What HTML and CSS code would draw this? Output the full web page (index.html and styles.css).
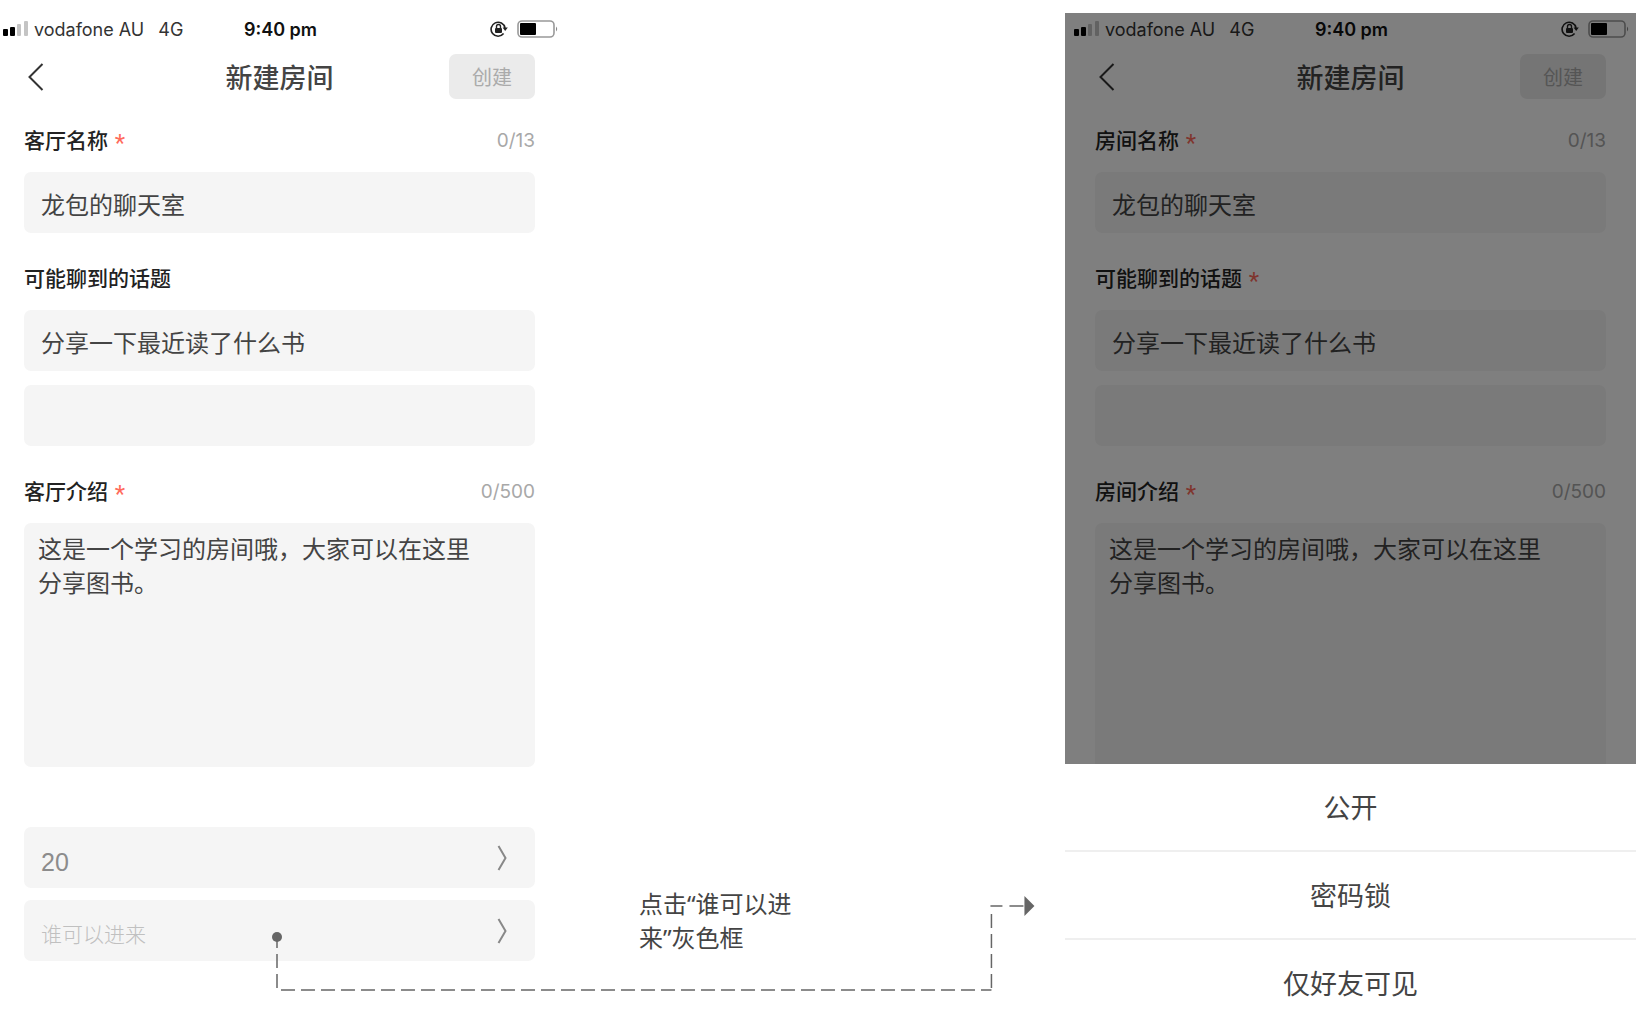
FILE: index.html
```html
<!DOCTYPE html>
<html lang="zh-CN">
<head>
    <meta charset="UTF-8">
    <meta name="viewport" content="width=device-width, initial-scale=1.0">
    <title>新建房间</title>
    <link rel="stylesheet" href="styles.css">
</head>
<body>
    <!-- Icon dùng chung cho hai màn hình -->
    <svg class="sprite" aria-hidden="true">
        <symbol id="icon-signal" viewBox="0 0 26 16">
            <rect x="0" y="8" width="5" height="7" rx="1" fill="#000"/>
            <rect x="7" y="6" width="5" height="9" rx="1" fill="#000"/>
            <rect x="14" y="3" width="4" height="12" rx="1" fill="#c4c4c4"/>
            <rect x="21" y="0" width="4" height="15" rx="1" fill="#c4c4c4"/>
        </symbol>
        <symbol id="icon-lock" viewBox="0 0 18 18">
            <path d="M13.6 13.6A7 7 0 1 1 15 8" fill="none" stroke="#222" stroke-width="1.6"/>
            <path d="M12.6 7.4h5.2l-2.6 3.6z" fill="#222"/>
            <rect x="5" y="8" width="7" height="5" rx="1" fill="#222"/>
            <path d="M6.5 8V6.5a2 2 0 0 1 4 0V8" fill="none" stroke="#222" stroke-width="1.4"/>
        </symbol>
        <symbol id="icon-battery" viewBox="0 0 41 18">
            <rect x="1" y="1" width="36" height="16" rx="4" fill="none" stroke="#999" stroke-width="1.6"/>
            <rect x="3" y="3" width="16" height="12" rx="1" fill="#000"/>
            <path d="M39 6.5q2.4 2.5 0 5z" fill="#888"/>
        </symbol>
        <symbol id="icon-back" viewBox="0 0 16 28">
            <path d="M14.5 1L1.5 14l13 13" fill="none" stroke="#333" stroke-width="2"/>
        </symbol>
        <symbol id="icon-next" viewBox="0 0 10 26">
            <path d="M1.5 1l7 12-7 12" fill="none" stroke="#888" stroke-width="2"/>
        </symbol>
    </svg>

    <main class="board">
        <section class="phone phone-left">
            <div class="status-bar">
                <div class="carrier">
                    <svg class="signal"><use href="#icon-signal"/></svg>
                    <span>vodafone AU</span>
                    <span class="network">4G</span>
                </div>
                <div class="time">9:40 pm</div>
                <div class="indicators">
                    <svg class="lock"><use href="#icon-lock"/></svg>
                    <svg class="battery"><use href="#icon-battery"/></svg>
                </div>
            </div>
            <header class="nav">
                <button class="back" aria-label="返回"><svg><use href="#icon-back"/></svg></button>
                <h1>新建房间</h1>
                <button class="create">创建</button>
            </header>
            <form class="form">
                <div class="field">
                    <div class="field-head">
                        <label for="name">客厅名称 <span class="star">*</span></label>
                        <span class="count">0/13</span>
                    </div>
                    <input type="text" class="box" id="name" value="龙包的聊天室">
                </div>
                <div class="field">
                    <div class="field-head">
                        <label for="topic">可能聊到的话题</label>
                    </div>
                    <input type="text" class="box" id="topic" value="分享一下最近读了什么书">
                    <input type="text" class="box" aria-label="话题二">
                </div>
                <div class="field">
                    <div class="field-head">
                        <label for="intro">客厅介绍 <span class="star">*</span></label>
                        <span class="count">0/500</span>
                    </div>
                    <textarea class="box intro" id="intro">这是一个学习的房间哦，大家可以在这里
分享图书。</textarea>
                </div>
                <div class="selects">
                    <div class="select-row">
                        <select class="box limit" aria-label="人数">
                            <option>20</option>
                        </select>
                        <svg class="next"><use href="#icon-next"/></svg>
                    </div>
                    <div class="select-row">
                        <select class="box who" aria-label="谁可以进来">
                            <option>谁可以进来</option>
                        </select>
                        <svg class="next"><use href="#icon-next"/></svg>
                    </div>
                </div>
            </form>
        </section>

        <p class="note">点击“谁可以进<br>来”灰色框</p>

        <section class="phone phone-right">
            <div class="screen">
                <div class="status-bar">
                    <div class="carrier">
                        <svg class="signal"><use href="#icon-signal"/></svg>
                        <span>vodafone AU</span>
                        <span class="network">4G</span>
                    </div>
                    <div class="time">9:40 pm</div>
                    <div class="indicators">
                        <svg class="lock"><use href="#icon-lock"/></svg>
                        <svg class="battery"><use href="#icon-battery"/></svg>
                    </div>
                </div>
                <header class="nav">
                    <button class="back" aria-label="返回"><svg><use href="#icon-back"/></svg></button>
                    <h1>新建房间</h1>
                    <button class="create">创建</button>
                </header>
                <form class="form">
                    <div class="field">
                        <div class="field-head">
                            <label for="name2">房间名称 <span class="star">*</span></label>
                            <span class="count">0/13</span>
                        </div>
                        <input type="text" class="box" id="name2" value="龙包的聊天室">
                    </div>
                    <div class="field">
                        <div class="field-head">
                            <label for="topic2">可能聊到的话题 <span class="star">*</span></label>
                        </div>
                        <input type="text" class="box" id="topic2" value="分享一下最近读了什么书">
                        <input type="text" class="box" aria-label="话题二">
                    </div>
                    <div class="field">
                        <div class="field-head">
                            <label for="intro2">房间介绍 <span class="star">*</span></label>
                            <span class="count">0/500</span>
                        </div>
                        <textarea class="box intro cut" id="intro2">这是一个学习的房间哦，大家可以在这里
分享图书。</textarea>
                    </div>
                </form>
                <div class="mask"></div>
            </div>
            <div class="sheet">
                <button>公开</button>
                <button>密码锁</button>
                <button>仅好友可见</button>
            </div>
        </section>

        <!-- Đường nối từ ô chọn sang bảng lựa chọn -->
        <svg class="connector" aria-hidden="true">
            <circle cx="0" cy="31" r="5"/>
            <line x1="0" y1="28" x2="0" y2="84"/>
            <line x1="4" y1="84" x2="100%" y2="84"/>
            <line x1="100%" y1="8" x2="100%" y2="84"/>
            <svg x="100%" class="arrow">
                <line x1="-1" y1="0" x2="11" y2="0"/>
                <line x1="18" y1="0" x2="32" y2="0"/>
                <path d="M33-10l10 10-10 10z"/>
            </svg>
        </svg>
    </main>
</body>
</html>
```
FILE: styles.css
```css
* {
    box-sizing: border-box;
}
body {
    margin: 0;
    font-family: "Noto Sans CJK SC", sans-serif;
    background-color: #fff;
    color: #444;
}
button,
input,
textarea,
select {
    font-family: inherit;
    color: inherit;
    border: none;
    margin: 0;
}
.sprite {
    display: none;
}
.board {
    position: relative;
    display: grid;
    grid-template-columns: 565fr 500fr 571fr;
    padding: 13px 14px 0 0;
    overflow: hidden;
}
.phone {
    min-width: 0;
}
.phone-left {
    margin-left: -6px;
}

/* Thanh trạng thái */
.status-bar {
    display: grid;
    grid-template-columns: 1fr auto 1fr;
    align-items: center;
    height: 32px;
    padding: 0 7px 0 9px;
    font-family: Inter, sans-serif;
    font-size: 18px;
    color: #333;
}
.carrier {
    display: flex;
    align-items: center;
    white-space: nowrap;
}
.signal {
    width: 26px;
    height: 16px;
    margin-right: 5px;
}
.network {
    margin-left: 14px;
}
.time {
    font-weight: 600;
    color: #111;
}
.indicators {
    display: flex;
    align-items: center;
    justify-content: flex-end;
    gap: 9px;
}
.lock {
    width: 18px;
    height: 18px;
}
.battery {
    width: 41px;
    height: 18px;
}

.nav {
    display: grid;
    grid-template-columns: 1fr auto 1fr;
    align-items: center;
    padding: 9px 30px 28px;
}
.nav h1 {
    margin: 0;
    font-size: 27px;
    line-height: 44px;
    font-weight: 500;
    color: #444;
}
.back {
    justify-self: start;
    padding: 0 4px;
    background: none;
}
.back svg {
    display: block;
    width: 16px;
    height: 28px;
}
.create {
    justify-self: end;
    width: 86px;
    height: 45px;
    padding: 0;
    font-size: 20px;
    color: #aaa;
    background-color: #ebebeb;
    border-radius: 7px;
}

/* Biểu mẫu */
.form {
    padding: 0 30px;
}
.field {
    margin-bottom: 32px;
}
.field-head {
    display: flex;
    justify-content: space-between;
    height: 28px;
    margin-bottom: 17px;
    font-size: 21px;
    line-height: 28px;
}
.field-head label {
    font-weight: 500;
    line-height: 24px;
    color: #222;
}
.star {
    margin-left: 2px;
    font-family: Roboto, sans-serif;
    font-size: 24px;
    font-weight: 400;
    line-height: 20px;
    vertical-align: -3px;
    color: #ff6b5c;
}
.count {
    font-family: Inter, sans-serif;
    font-size: 19px;
    font-weight: 400;
    color: #a8a8a8;
}
.box {
    display: block;
    width: 100%;
    height: 61px;
    padding: 2px 17px 0;
    font-size: 24px;
    background-color: #f5f5f5;
    border-radius: 7px;
}
.box + .box {
    margin-top: 14px;
}
.intro {
    height: 244px;
    padding: 8px 14px;
    line-height: 34px;
    resize: none;
    overflow: hidden;
}
.intro.cut {
    height: 241px;
    border-radius: 7px 7px 0 0;
}
.selects {
    display: grid;
    gap: 12px;
    margin-top: 60px;
}
.select-row {
    position: relative;
}
.select-row .box {
    appearance: none;
}
.select-row .limit {
    font-family: "Liberation Sans", sans-serif;
    font-size: 25px;
    padding-top: 9px;
    color: #8c8c8c;
}
.select-row .who {
    padding-top: 4px;
    font-size: 21px;
    font-weight: 300;
    color: #c0c0c0;
}
.next {
    position: absolute;
    top: 18px;
    right: 28px;
    width: 10px;
    height: 26px;
    pointer-events: none;
}

.note {
    align-self: end;
    margin: 0 0 58px 74px;
    font-family: "Noto Sans", "Noto Sans CJK SC", sans-serif;
    font-size: 24px;
    line-height: 34px;
}

/* Màn hình bị làm mờ và bảng lựa chọn */
.screen {
    position: relative;
}
.screen .field:last-child {
    margin-bottom: 0;
}
.mask {
    position: absolute;
    inset: 0;
    background-color: rgba(0, 0, 0, 0.5);
}
.sheet button {
    display: block;
    width: 100%;
    padding: 21px 0;
    font-size: 27px;
    line-height: 44px;
    background-color: #fff;
    border-bottom: 2px solid #efefef;
}
.sheet button:last-child {
    padding-bottom: 8px;
    border-bottom: none;
}

.connector {
    position: absolute;
    top: 906px;
    left: 16.8%;
    width: 43.3%;
    height: 86px;
    overflow: visible;
    pointer-events: none;
    fill: #666;
}
.connector line {
    stroke: #666;
    stroke-width: 1.5;
    stroke-dasharray: 14 6;
}
.arrow {
    overflow: visible;
}
```
